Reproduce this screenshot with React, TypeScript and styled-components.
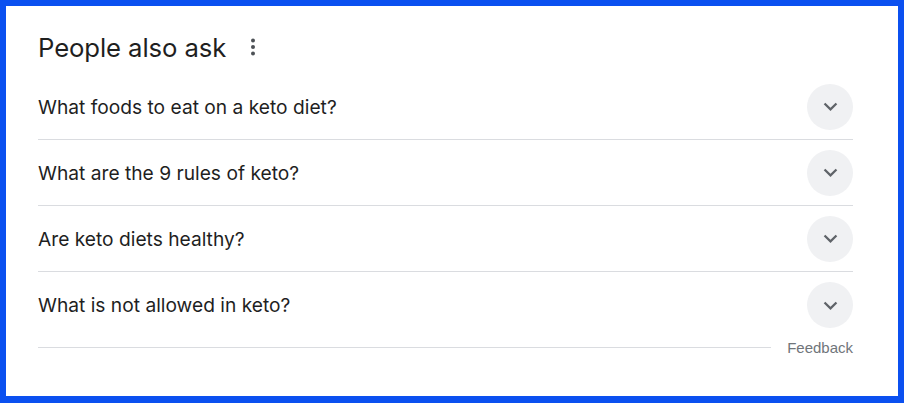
import styled, { createGlobalStyle } from "styled-components";

const GlobalStyle = createGlobalStyle`
  html, body {
    margin: 0;
    padding: 0;
    background: #ffffff;
  }
  * {
    box-sizing: border-box;
  }
`;

const Frame = styled.div`
  width: 904px;
  height: 403px;
  border: 6px solid #0b50f0;
  border-bottom-width: 7px;
  background: #ffffff;
  padding: 0 45px 0 32px;
  font-family: Inter, "Open Sans", Arial, sans-serif;
  color: #1f1f1f;
`;

const Header = styled.div`
  display: flex;
  align-items: center;
  height: 68px;
  padding-top: 14px;
  gap: 21px;
`;

const Title = styled.h2`
  margin: 0;
  font-size: 25.7px;
  font-weight: 400;
  color: #1f1f1f;
  letter-spacing: -0.1px;
`;

const MenuButton = styled.button`
  display: flex;
  align-items: center;
  justify-content: center;
  width: 12px;
  height: 24px;
  padding: 0;
  border: none;
  background: transparent;
  color: #4d5156;
`;

const List = styled.div`
  display: flex;
  flex-direction: column;
`;

const Row = styled.div<{ $last?: boolean }>`
  display: flex;
  align-items: center;
  justify-content: space-between;
  height: 66px;
  border-bottom: ${(p) => (p.$last ? "none" : "1px solid #dadce0")};
`;

const Question = styled.span`
  font-size: 19.2px;
  line-height: 24px;
  color: #1f1f1f;
`;

const Toggle = styled.button`
  display: flex;
  align-items: center;
  justify-content: center;
  width: 46px;
  height: 46px;
  padding: 0;
  border: none;
  border-radius: 50%;
  background: #f0f1f3;
  color: #5f6368;
`;

const Footer = styled.div`
  display: flex;
  align-items: center;
  gap: 16px;
  margin-top: 1px;
`;

const Rule = styled.div`
  flex: 1;
  height: 1px;
  background: #dadce0;
`;

const FeedbackLink = styled.span`
  font-family: Arial, "Liberation Sans", sans-serif;
  font-size: 15px;
  color: #70757a;
`;

const questions = [
  "What foods to eat on a keto diet?",
  "What are the 9 rules of keto?",
  "Are keto diets healthy?",
  "What is not allowed in keto?",
];

function Chevron() {
  return (
    <svg width="27" height="27" viewBox="0 0 24 24" fill="currentColor">
      <path d="M16.59 8.59 12 13.17 7.41 8.59 6 10l6 6 6-6z" />
    </svg>
  );
}

function Dots() {
  return (
    <svg width="12" height="20" viewBox="0 0 12 20" fill="currentColor">
      <circle cx="6" cy="3.5" r="2" />
      <circle cx="6" cy="10" r="2" />
      <circle cx="6" cy="16.5" r="2" />
    </svg>
  );
}

export default function App() {
  return (
    <>
      <GlobalStyle />
      <Frame>
        <Header>
          <Title>People also ask</Title>
          <MenuButton>
            <Dots />
          </MenuButton>
        </Header>
        <List>
          {questions.map((q, i) => (
            <Row key={q} $last={i === questions.length - 1}>
              <Question>{q}</Question>
              <Toggle>
                <Chevron />
              </Toggle>
            </Row>
          ))}
        </List>
        <Footer>
          <Rule />
          <FeedbackLink>Feedback</FeedbackLink>
        </Footer>
      </Frame>
    </>
  );
}
